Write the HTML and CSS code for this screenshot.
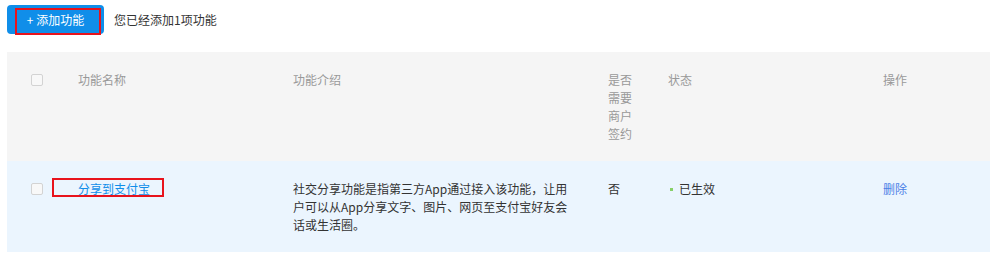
FILE: index.html
```html
<!DOCTYPE html>
<html lang="zh-CN">
<head>
    <meta charset="UTF-8">
    <meta name="viewport" content="width=device-width, initial-scale=1.0">
    <title>功能列表</title>
    <link rel="stylesheet" href="styles.css">
</head>
<body>
    <div class="toolbar">
        <button class="btn-add">+ 添加功能<span class="mark mark-btn"></span></button>
        <span class="summary">您已经添加1项功能</span>
    </div>

    <div class="table">
        <div class="row head">
            <div class="cell cell-check"><span class="checkbox"></span></div>
            <div class="cell">功能名称</div>
            <div class="cell cell-desc">功能介绍</div>
            <div class="cell cell-sign">是否需要商户签约</div>
            <div class="cell">状态</div>
            <div class="cell">操作</div>
        </div>
        <div class="row body">
            <div class="cell cell-check"><span class="checkbox"></span></div>
            <div class="cell cell-name">
                <a class="link" href="#">分享到支付宝</a>
                <span class="mark mark-name"></span>
            </div>
            <div class="cell cell-desc">社交分享功能是指第三方App通过接入该功能，让用户可以从App分享文字、图片、网页至支付宝好友会话或生活圈。</div>
            <div class="cell cell-sign">否</div>
            <div class="cell"><span class="dot"></span>已生效</div>
            <div class="cell"><a class="link link-del" href="#">删除</a></div>
        </div>
    </div>
</body>
</html>
```

FILE: styles.css
```css
* {
    margin: 0;
    padding: 0;
    box-sizing: border-box;
}

body {
    font-family: "Noto Sans CJK SC", "Liberation Sans", sans-serif;
    font-size: 12px;
    line-height: 18px;
    color: #333;
    background: #fff;
    padding: 5px 1px 0 7px;
}

.toolbar {
    display: flex;
    align-items: center;
    gap: 10px;
    height: 29px;
}

.btn-add {
    position: relative;
    height: 29px;
    width: 97px;
    border: none;
    border-radius: 4px;
    background: #108ee9;
    color: #fff;
    font-family: inherit;
    font-size: 12px;
    cursor: pointer;
}

/* red annotation boxes */
.mark {
    position: absolute;
    border: 2px solid #e8131c;
    pointer-events: none;
}

.mark-btn {
    left: 8px;
    top: 3px;
    width: 86px;
    height: 27px;
}

.summary {
    color: #333;
}

.table {
    margin-top: 18px;
}

.row {
    display: grid;
    grid-template-columns: 71px 215px 315px 60px 215px 107px;
    padding: 19px 0 18px;
}

.head {
    background: #f5f5f5;
    color: #999;
}

.body {
    background: #ebf5fe;
}

.cell-check {
    padding-left: 24px;
    padding-top: 3px;
}

.checkbox {
    display: block;
    width: 12px;
    height: 12px;
    border: 1px solid #d3d3d3;
    border-radius: 2px;
    background: #f8f8f8;
}

.cell-name {
    position: relative;
}

.mark-name {
    left: -26px;
    top: -2px;
    width: 112px;
    height: 19px;
}

.cell-desc {
    padding-right: 35px;
}

.cell-sign {
    width: 30px;
}

.link {
    color: #108ee9;
    text-decoration: none;
}

.link-del {
    color: #4b7fe6;
}

.dot {
    display: inline-block;
    width: 3px;
    height: 3px;
    background: #87d068;
    margin: 0 6px 2px 2px;
    vertical-align: middle;
}
```
